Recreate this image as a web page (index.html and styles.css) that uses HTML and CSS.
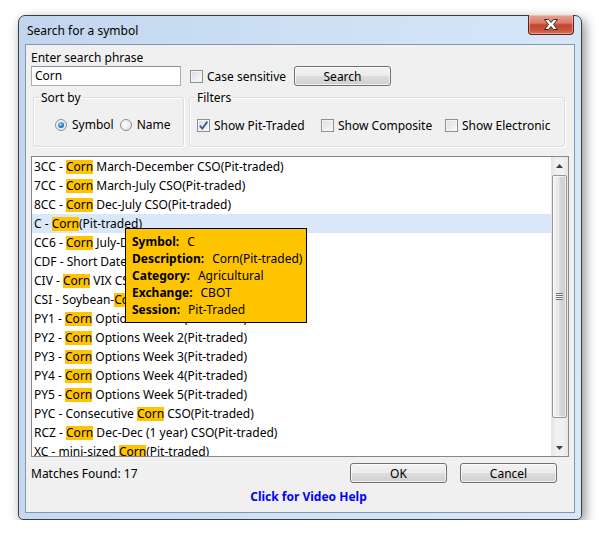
FILE: index.html
```html
<!DOCTYPE html>
<html>
<head>
<meta charset="utf-8">
<link rel="stylesheet" href="styles.css">
</head>
<body>
<div class="stage">
  <div class="window">
    <div class="titlebar">
      <span class="title">Search for a symbol</span>
      <span class="close">
        <svg width="44" height="19" viewBox="0 0 44 19">
          <path d="M15.5 4.5 L19.5 4.5 L22 7.5 L24.5 4.5 L28.5 4.5 L24.5 9.5 L28.5 14.5 L24.5 14.5 L22 11.5 L19.5 14.5 L15.5 14.5 L19.5 9.5 Z" fill="#ffffff" stroke="#3a2626" stroke-width="1" stroke-linejoin="round"/>
        </svg>
      </span>
    </div>
    <div class="client">
      <div class="label-top">Enter search phrase</div>
      <div class="search-row">
        <div class="textbox">Corn</div>
        <label class="check-item case"><span class="cb"></span><span>Case sensitive</span></label>
        <button class="btn search-btn">Search</button>
      </div>
      <div class="groups">
        <fieldset class="group sortby">
          <legend>Sort by</legend>
          <div class="group-body sort-body">
            <span class="radio-item"><span class="rb on"></span><span>Symbol</span></span>
            <span class="radio-item"><span class="rb"></span><span>Name</span></span>
          </div>
        </fieldset>
        <fieldset class="group filters">
          <legend>Filters</legend>
          <div class="group-body filter-body">
            <span class="check-item fixed"><span class="cb checked"><svg width="11" height="11" viewBox="0 0 11 11"><path d="M1.8 5.6 L4.3 8.6 L9.4 1.6" fill="none" stroke="#3d5a9a" stroke-width="1.8"/></svg></span><span>Show Pit-Traded</span></span>
            <span class="check-item fixed"><span class="cb"></span><span>Show Composite</span></span>
            <span class="check-item"><span class="cb"></span><span>Show Electronic</span></span>
          </div>
        </fieldset>
      </div>
      <div class="listbox">
        <div class="rows">
          <div class="row">3CC - <span class="hl">Corn</span> March-December CSO(Pit-traded)</div>
          <div class="row">7CC - <span class="hl">Corn</span> March-July CSO(Pit-traded)</div>
          <div class="row">8CC - <span class="hl">Corn</span> Dec-July CSO(Pit-traded)</div>
          <div class="row sel">C - <span class="hl">Corn</span>(Pit-traded)</div>
          <div class="row">CC6 - <span class="hl">Corn</span> July-Dec CSO(Pit-traded)</div>
          <div class="row">CDF - Short Dated <span class="hl">Corn</span>(Pit-traded)</div>
          <div class="row">CIV - <span class="hl">Corn</span> VIX CSO(Pit-traded)</div>
          <div class="row">CSI - Soybean-<span class="hl">Corn</span> Price Ratio CSO(Pit-traded)</div>
          <div class="row">PY1 - <span class="hl">Corn</span> Options Week 1(Pit-traded)</div>
          <div class="row">PY2 - <span class="hl">Corn</span> Options Week 2(Pit-traded)</div>
          <div class="row">PY3 - <span class="hl">Corn</span> Options Week 3(Pit-traded)</div>
          <div class="row">PY4 - <span class="hl">Corn</span> Options Week 4(Pit-traded)</div>
          <div class="row">PY5 - <span class="hl">Corn</span> Options Week 5(Pit-traded)</div>
          <div class="row">PYC - Consecutive <span class="hl">Corn</span> CSO(Pit-traded)</div>
          <div class="row">RCZ - <span class="hl">Corn</span> Dec-Dec (1 year) CSO(Pit-traded)</div>
          <div class="row">XC - mini-sized <span class="hl">Corn</span>(Pit-traded)</div>
        </div>
        <div class="scrollbar">
          <div class="arrow up"><svg width="7" height="4" viewBox="0 0 7 4"><path d="M0 4 L3.5 0 L7 4 Z" fill="#404040"/></svg></div>
          <div class="thumb"><span class="grip"></span></div>
          <div class="track"></div>
          <div class="arrow down"><svg width="7" height="4" viewBox="0 0 7 4"><path d="M0 0 L3.5 4 L7 0 Z" fill="#404040"/></svg></div>
        </div>
        <div class="tooltip">
          <div class="tip-line"><b>Symbol:</b><span class="v">C</span></div>
          <div class="tip-line"><b>Description:</b><span class="v">Corn(Pit-traded)</span></div>
          <div class="tip-line"><b>Category:</b><span class="v">Agricultural</span></div>
          <div class="tip-line"><b>Exchange:</b><span class="v">CBOT</span></div>
          <div class="tip-line"><b>Session:</b><span class="v">Pit-Traded</span></div>
        </div>
      </div>
      <div class="bottom-row">
        <span class="matches">Matches Found: 17</span>
        <button class="btn ok-btn">OK</button>
        <button class="btn cancel-btn">Cancel</button>
      </div>
      <div class="help">Click for Video Help</div>
    </div>
  </div>
</div>
</body>
</html>
```
FILE: styles.css
```css
* { box-sizing: border-box; }
html, body { margin: 0; padding: 0; background: #ffffff; }
body {
  font-family: "Noto Sans", "Open Sans", sans-serif;
  font-size: 12px;
  color: #000;
}
.stage { padding: 15px 0 0 18px; }
.window {
  width: 564px;
  height: 505px;
  border: 1px solid #3b3f45;
  border-radius: 7px 7px 5px 5px;
  background: linear-gradient(100deg, #c1d6ee 0%, #cde0f4 45%, #d9e8f8 100%);
  padding: 0 6px 6px 6px;
  box-shadow: 3px 4px 12px rgba(0,0,0,0.45);
  display: flex;
  flex-direction: column;
}
.titlebar {
  height: 28px;
  display: flex;
  align-items: flex-start;
  justify-content: space-between;
}
.title {
  margin-top: 7px;
  margin-left: 2px;
  line-height: 16px;
  color: #000;
}
.close {
  flex: none;
  width: 46px;
  height: 20px;
  margin-top: -1px;
  margin-right: 1px;
  border: 1px solid #5e2019;
  border-top: none;
  border-radius: 0 0 4px 4px;
  background: linear-gradient(to bottom, #e7a394 0%, #d97c69 42%, #c4442f 52%, #c9533e 80%, #d97560 100%);
  box-shadow: inset 0 0 0 1px rgba(255,220,210,0.45);
  display: flex;
  align-items: center;
  justify-content: center;
}
.close svg { display: block; }
.client {
  flex: 1;
  background: #f0f0f0;
  border: 1px solid #8397b0;
  padding: 5px 0 0 5px;
  display: flex;
  flex-direction: column;
}
.label-top { line-height: 15px; height: 15px; }
.search-row {
  margin-top: 1px;
  display: flex;
  align-items: center;
  height: 20px;
}
.textbox {
  width: 150px;
  height: 20px;
  border: 1px solid #abadb3;
  border-top-color: #8e9197;
  background: #fff;
  padding: 0 3px;
  line-height: 18px;
}
.check-item { display: inline-flex; align-items: center; }
.check-item .cb { margin-right: 4px; }
.case { margin-left: 9px; }
.cb {
  width: 13px;
  height: 13px;
  border: 1px solid #8e8f8f;
  background: linear-gradient(135deg, #dcdcdc, #fbfbfb);
  box-shadow: inset 0 0 0 1px #f4f4f4;
  display: inline-flex;
  align-items: center;
  justify-content: center;
  flex: none;
}
.cb svg { display: block; }
.btn {
  font-family: inherit;
  font-size: 12px;
  color: #000;
  height: 20px;
  border: 1px solid #707070;
  border-radius: 3px;
  background: linear-gradient(to bottom, #f2f2f2 0%, #ebebeb 48%, #dddddd 52%, #cfcfcf 100%);
  box-shadow: inset 0 0 0 1px rgba(255,255,255,0.7);
  padding: 0;
  line-height: 17px;
}
.search-btn { width: 97px; margin-left: 8px; }
.groups {
  display: flex;
  margin-top: 4px;
  margin-left: 2px;
  gap: 5px;
  height: 57px;
}
.group {
  margin: 0;
  padding: 0;
  border: 1px solid #d5dfe5;
  border-radius: 3px;
  box-shadow: inset 1px 1px 0 #ffffff, 1px 1px 0 #ffffff;
  height: 57px;
  min-width: 0;
}
.group legend {
  padding: 0 2px;
  margin-left: 5px;
  line-height: 15px;
}
.sortby { width: 151px; }
.filters { width: 376px; }
.group-body {
  display: flex;
  align-items: center;
}
.sort-body { padding: 11px 0 0 21px; }
.radio-item { display: inline-flex; align-items: center; margin-right: 6px; }
.rb {
  width: 12px;
  height: 12px;
  border-radius: 50%;
  border: 1px solid #8e8f8f;
  background: radial-gradient(circle at 40% 40%, #ffffff, #dcdcdc);
  margin-right: 5px;
  display: inline-flex;
  align-items: center;
  justify-content: center;
  flex: none;
}
.rb.on::after {
  content: "";
  width: 6px;
  height: 6px;
  border-radius: 50%;
  background: radial-gradient(circle at 40% 35%, #9fdcff 0%, #2b7fc0 55%, #124d86 100%);
}
.filter-body { padding: 12px 0 0 7px; }
.check-item.fixed { width: 124px; }
.listbox {
  position: relative;
  margin-top: 9px;
  width: 538px;
  height: 301px;
  border: 1px solid #828790;
  background: #fff;
  display: flex;
  overflow: hidden;
}
.rows { flex: 1; overflow: hidden; }
.row {
  height: 19px;
  line-height: 19px;
  padding-left: 2px;
  white-space: nowrap;
}
.row.sel { background: #d9e8f9; }
.hl {
  background: #ffc300;
  display: inline-block;
  line-height: 14px;
  height: 14px;
}
.scrollbar {
  width: 17px;
  flex: none;
  display: flex;
  flex-direction: column;
  background: linear-gradient(to right, #e3e3e3, #f1f1f1 30%, #f1f1f1 70%, #e6e6e6);
}
.arrow {
  height: 17px;
  display: flex;
  align-items: center;
  justify-content: center;
}
.thumb {
  height: 243px;
  margin: 1px 1px 0 1px;
  border: 1px solid #979797;
  border-radius: 2px;
  background: linear-gradient(to right, #f3f3f3 0%, #e8e8e8 45%, #d6d6d6 55%, #cfcfcf 100%);
  box-shadow: inset 0 0 0 1px rgba(255,255,255,0.6);
  display: flex;
  align-items: center;
  justify-content: center;
}
.grip {
  width: 7px;
  height: 7px;
  background: repeating-linear-gradient(to bottom, #707070 0 1px, #f4f4f4 1px 2px);
}
.track { flex: 1; }
.tooltip {
  position: absolute;
  left: 93px;
  top: 71px;
  width: 182px;
  height: 95px;
  background: #ffc400;
  border: 1px solid #000;
  padding: 4px 0 0 6px;
}
.tip-line { line-height: 17px; white-space: nowrap; }
.tip-line b { font-weight: 700; }
.tip-line .v { margin-left: 8px; }
.bottom-row {
  display: flex;
  align-items: center;
  height: 20px;
  margin-top: 6px;
}
.matches { flex: 1; }
.ok-btn { width: 97px; }
.cancel-btn { width: 97px; margin-left: 13px; margin-right: 17px; }
.help {
  margin-top: 6px;
  text-align: center;
  padding-left: 12px;
  color: #0000ff;
  font-weight: 700;
  line-height: 16px;
}
```
